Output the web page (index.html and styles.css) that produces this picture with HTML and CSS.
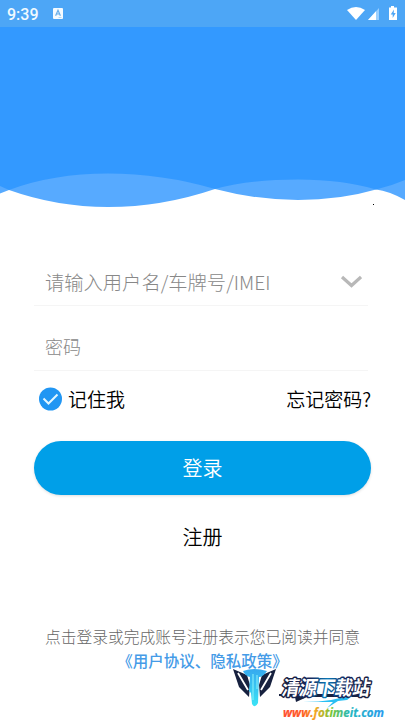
FILE: index.html
```
<!DOCTYPE html>
<html lang="zh-CN">
<head>
<meta charset="utf-8">
<title>登录</title>
<link rel="stylesheet" href="styles.css">
</head>
<body>
<header class="hero">
  <svg class="waves" width="405" height="220" viewBox="0 0 405 220">
    <path fill="#57aaff" d="M0 0H405V200Q389 191 376 189.500Q340 200 298 200Q257 200 215 189Q162 207 108 207Q57 207 9 190L0 193.500Z"/>
    <path fill="#3399ff" d="M0 0H405V180Q391 186 376 189.500Q343 179.500 298 179.500Q250 179.500 215 189Q162 173.500 108 173.500Q53 173.500 9 190L0 186Z"/>
    <path d="M373 204h1v1h-1z"/>
  </svg>
  <div class="status">
    <span class="time">9:39</span>
    <svg class="app" width="10" height="11" viewBox="0 0 10 11"><rect width="10" height="11" rx="1" fill="#f5fbff"/><path d="M2.600 7.700 5 2.300 7.400 7.700M3.500 6h3" fill="none" stroke="#68aee9" stroke-width="1.200"/><path d="M5.500 9.500h3" stroke="#9bcdf5" stroke-width=".7"/></svg>
    <svg class="signals" width="51" height="16" viewBox="0 0 51 16"><path fill="#fff" d="M0 4Q9-2 18 4L9 14Z"/><path fill="#9acfff" d="M32 2V14H21Z"/><path fill="#fff" d="M29 5.300V14H21Z"/><path fill="#fff" d="M44 0h3v1.500h3V14h-8V1.500h2Z"/><path fill="#4da6f6" d="M47 3.500 43.700 8.500h2V12l3-5h-2Z"/></svg>
  </div>
</header>
<main class="login">
  <div class="field account"><span>请输入用户名/车牌号/IMEI</span><svg class="arrow" width="22" height="14" viewBox="0 0 22 14"><path d="M2 2 11.500 10.500 21 2" fill="none" stroke="#b8b8b8" stroke-width="3.200"/></svg></div>
  <div class="field password"><span>密码</span></div>
  <div class="options">
    <span class="remember"><svg width="24" height="24" viewBox="0 0 24 24"><circle cx="12.500" cy="12" r="11.500" fill="#2196f3"/><path d="M5.500 11.500 10.500 16.500 19.500 7.500" fill="none" stroke="#e4f7ff" stroke-width="2"/></svg>记住我</span>
    <span>忘记密码?</span>
  </div>
  <div class="submit">登录</div>
  <div class="register">注册</div>
  <footer class="terms"><div>点击登录或完成账号注册表示您已阅读并同意</div><div class="policy">《用户协议、隐私政策》</div></footer>
</main>
<svg class="brand" width="175" height="55" viewBox="230 665 175 55">
  <defs>
    <linearGradient id="site"><stop offset="0" stop-color="#ff4b2f"/><stop offset=".2" stop-color="#ff5a22"/><stop offset=".32" stop-color="#f3a421"/><stop offset=".48" stop-color="#76c532"/><stop offset=".66" stop-color="#24b6bd"/><stop offset="1" stop-color="#2799ed"/></linearGradient>
    <linearGradient id="outline"><stop offset="0" stop-color="#19203d"/><stop offset=".3" stop-color="#14275c"/><stop offset=".5" stop-color="#0879b8"/><stop offset=".7" stop-color="#14275c"/><stop offset="1" stop-color="#19203d"/></linearGradient>
    <linearGradient id="drip" x2="0" y2="1"><stop stop-color="#36a9ef"/><stop offset="1" stop-color="#3be3f5"/></linearGradient>
  </defs>
  <path fill="#17213f" d="M233 669 247 675 250 685 249 697 239 687ZM276 669 262 675 259 685 260 697 270 687Z"/>
  <path d="M238 673 248 690M271 673 261 690" fill="none" stroke="#fff" stroke-width="1.800"/>
  <path fill="url(#drip)" d="M243 671Q254 667 267 671Q263 677 259 677L258 703Q255 709 252 704L251 693 249 691 250 677Q245 676 243 671Z"/>
  <path d="M253 674V700M257 675V689" stroke="#8ef3fa" fill="none"/>
  <path fill="#17213f" d="M279 694H371L369 697H307L296 702 295 697 279 696Z"/>
  <path fill="#29bff3" d="M303 702Q335 702 356 693L347 700 338 701 327 708 333 702Z"/>
  <text class="brand-name" x="0" y="0" textLength="88" lengthAdjust="spacingAndGlyphs" transform="translate(281 694.500) skewX(-10)">清源下载站</text>
  <text class="brand-url" x="283" y="717" textLength="101" lengthAdjust="spacingAndGlyphs">www.fotimeit.com</text>
</svg>
</body>
</html>
```
FILE: styles.css
```
* { box-sizing: border-box; }
body {
  position: relative;
  width: 405px;
  height: 720px;
  margin: 0;
  overflow: hidden;
  background: #fff;
  color: #000;
  font-family: "Noto Sans CJK SC", sans-serif;
  font-size: 19px;
  font-weight: 350;
}
.hero { height: 242px; }
.waves { position: absolute; top: 0; left: 0; }
.status {
  position: relative;
  display: flex;
  align-items: center;
  height: 27px;
  padding: 0 7px;
  background: #4da6f6;
}
.time {
  width: 46px;
  padding-top: 1px;
  color: #f0faff;
  font: 500 16px/27px Roboto, sans-serif;
}
.signals { margin-left: auto; }
.login { padding: 0 34px; }
.field {
  display: flex;
  align-items: center;
  justify-content: space-between;
  width: 334px;
  height: 64px;
  padding: 16px 6px 0 11px;
  border-bottom: 1px solid #f5f5f5;
  color: #888;
  font-weight: 300;
}
.account { font-size: 19.300px; }
.password { font-size: 18px; height: 65px; }
.options {
  display: flex;
  align-items: center;
  justify-content: space-between;
  height: 55px;
  padding-left: 4px;
}
.remember { display: flex; align-items: center; gap: 6px; }
.submit {
  height: 54px;
  margin-top: 15px;
  border-radius: 27px;
  background: #009fe8;
  box-shadow: 0 1px 3px #0002;
  color: #fff;
  font-size: 20px;
  line-height: 54px;
  text-align: center;
}
.register {
  height: 84px;
  font-size: 20px;
  line-height: 84px;
  text-align: center;
}
.terms {
  padding-top: 46px;
  color: #666;
  font-size: 15.750px;
  font-weight: 300;
  line-height: 24px;
  text-align: center;
  white-space: nowrap;
}
.policy { color: #459be7; font-weight: 500; font-size: 15.500px; line-height: 22px; }
.brand { position: absolute; left: 230px; top: 665px; }
.brand-name {
  fill: #fff;
  stroke: url(#outline);
  stroke-width: 3px;
  stroke-linejoin: round;
  paint-order: stroke;
  font: 700 20px "Noto Sans CJK SC", sans-serif;
}
.brand-url {
  fill: url(#site);
  stroke: url(#site);
  stroke-width: .2px;
  font: italic 700 12.500px "Open Sans", sans-serif;
}
```
